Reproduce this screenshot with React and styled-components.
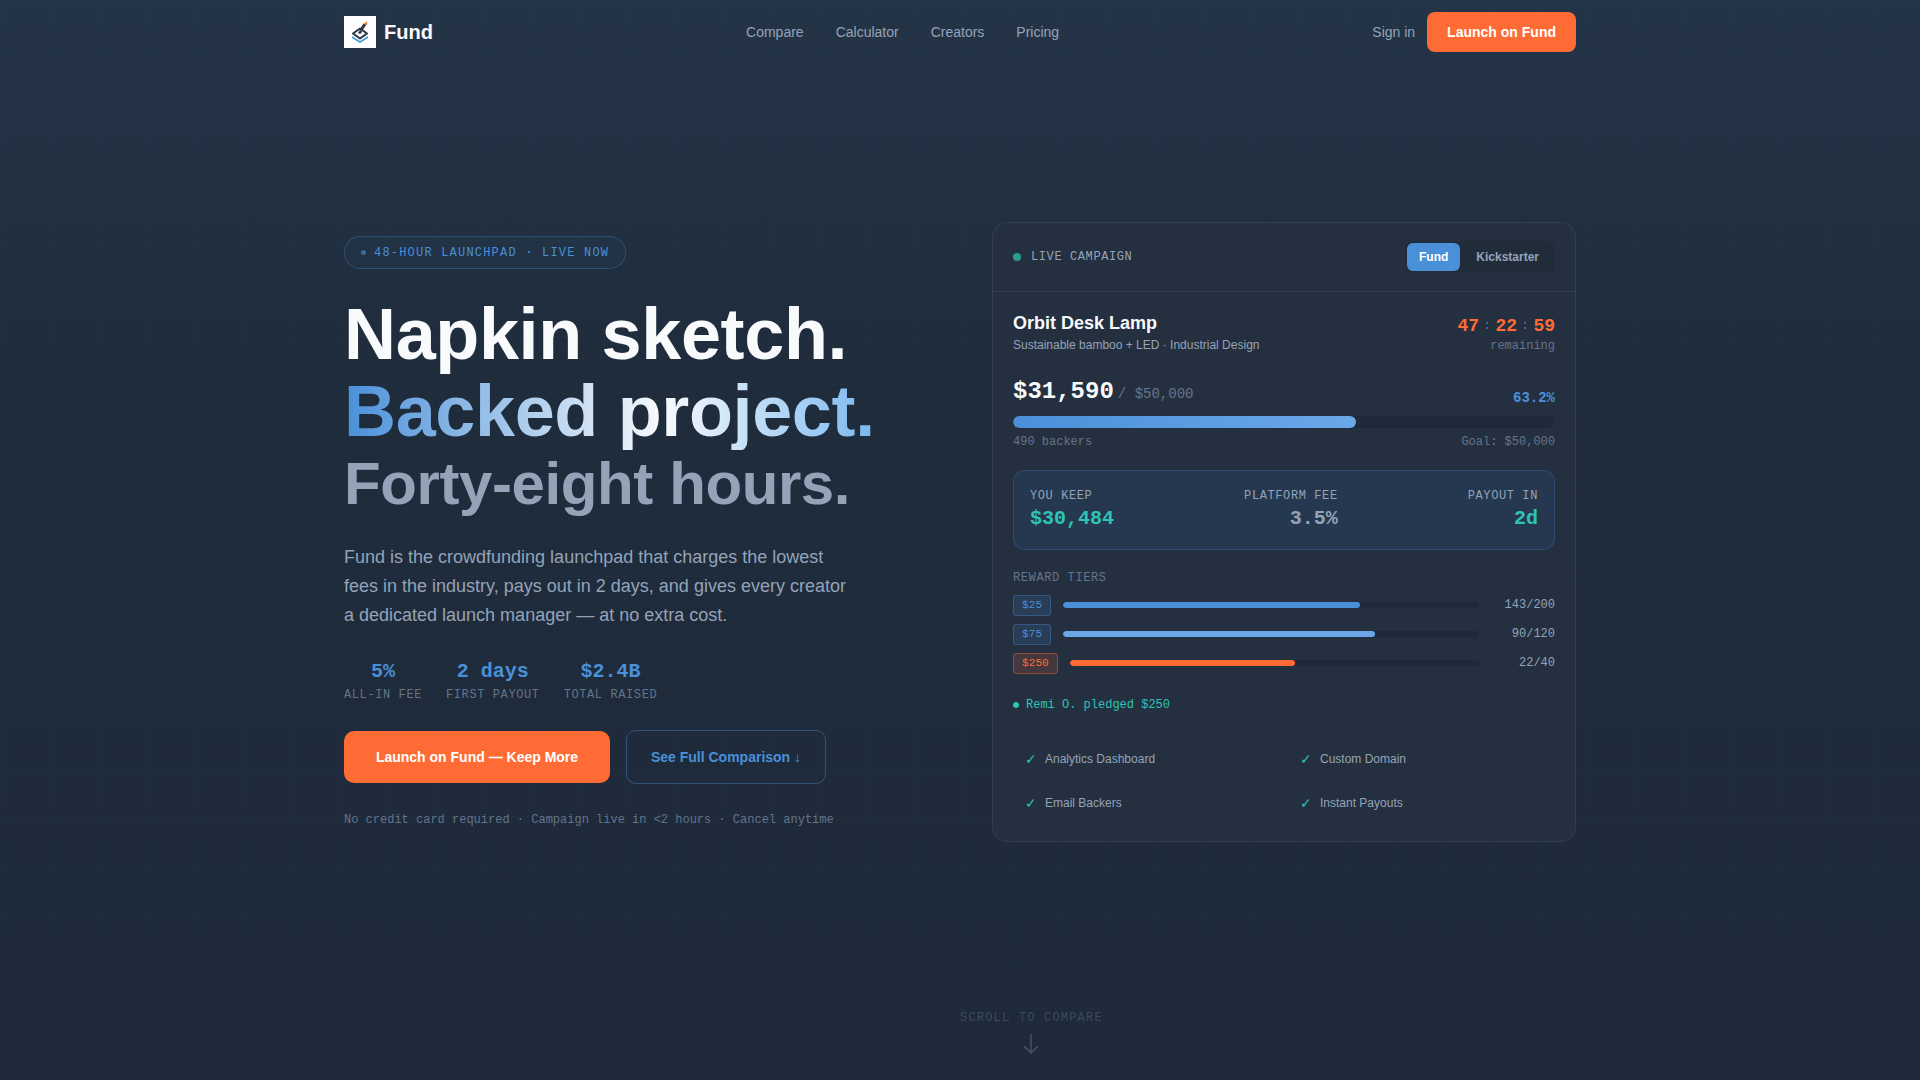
import React from "react";
import styled, { createGlobalStyle } from "styled-components";

const sans = `"Liberation Sans", Arial, sans-serif`;
const mono = `"Liberation Mono", "Courier New", monospace`;

const GlobalStyle = createGlobalStyle`
  * { box-sizing: border-box; }
  html, body { margin: 0; padding: 0; background: #1e2a3a; }
  body { font-family: ${sans}; color: #f8fafc; }
`;

const Page = styled.div`
  position: relative;
  height: 1080px;
  overflow: hidden;
  background-color: #1e2a3a;
  background-image:
    linear-gradient(rgba(74, 144, 217, 0.025) 1px, transparent 1px),
    linear-gradient(90deg, rgba(74, 144, 217, 0.025) 1px, transparent 1px),
    linear-gradient(180deg, #243447 0%, #1f2c3c 34%, #1e2a3a 100%);
  background-size: 48px 48px, 48px 48px, 100% 100%;
`;

const Nav = styled.nav`
  width: 1232px;
  height: 64px;
  margin: 0 auto;
  display: flex;
  align-items: center;
  justify-content: space-between;
`;

const Brand = styled.div`
  display: flex;
  align-items: center;
  gap: 8px;
  font-size: 20px;
  font-weight: 700;
`;

const LogoBox = styled.div`
  width: 32px;
  height: 32px;
  background: #ffffff;
  display: flex;
`;

const NavLinks = styled.div`
  display: flex;
  gap: 32px;
`;

const NavLink = styled.a`
  font-size: 14px;
  color: #94a3b8;
`;

const NavActions = styled.div`
  display: flex;
  align-items: center;
  gap: 12px;
`;

const NavCta = styled.button`
  height: 40px;
  padding: 0 20px;
  border: 0;
  border-radius: 8px;
  background: #ff6b35;
  color: #ffffff;
  font: 700 14px ${sans};
`;

const Hero = styled.main`
  width: 1232px;
  margin: 158px auto 0;
  display: grid;
  grid-template-columns: 584px 584px;
  gap: 64px;
  align-items: center;
`;

const Left = styled.section`
  padding-top: 1px;
  display: flex;
  flex-direction: column;
  align-items: flex-start;
`;

const Pill = styled.div`
  display: flex;
  align-items: center;
  gap: 8px;
  height: 33px;
  padding: 1px 16px 0;
  border: 1px solid rgba(74, 144, 217, 0.3);
  border-radius: 999px;
  background: rgba(74, 144, 217, 0.04);
  color: #4a90d9;
  font: 12px ${mono};
  letter-spacing: 1.2px;
`;

const PillDot = styled.span`
  width: 5px;
  height: 5px;
  border-radius: 50%;
  background: #4a90d9;
  opacity: 0.6;
`;

const Title = styled.h1`
  margin: 27px 0 0;
  font-size: 72px;
  line-height: 77px;
  font-weight: 700;
  letter-spacing: -0.36px;
  color: #f8fafc;
`;

const Line = styled.span`
  display: block;
`;

const Gradient = styled.span`
  display: inline-block;
  background: linear-gradient(90deg, #4a90d9 0%, #f8fafc 60%, #7ab8f0 100%);
  -webkit-background-clip: text;
  background-clip: text;
  color: transparent;
`;

const SubLine = styled.span`
  display: block;
  font-size: 60px;
  line-height: 68px;
  color: #94a3b8;
  letter-spacing: -0.4px;
`;

const Lead = styled.p`
  width: 510px;
  margin: 25px 0 0;
  font-size: 18px;
  line-height: 29.25px;
  color: #94a3b8;
`;

const Stats = styled.div`
  display: flex;
  gap: 24px;
  margin-top: 29px;
`;

const Stat = styled.div`
  display: flex;
  flex-direction: column;
  align-items: center;
`;

const StatValue = styled.div`
  font: 700 20px/26px ${mono};
  color: #4a90d9;
`;

const StatLabel = styled.div`
  margin-top: 2px;
  font: 12px/16px ${mono};
  letter-spacing: 0.6px;
  color: #64748b;
`;

const Actions = styled.div`
  display: flex;
  align-items: center;
  gap: 16px;
  margin-top: 27px;
`;

const Primary = styled.button`
  height: 52px;
  width: 266px;
  border: 0;
  border-radius: 10px;
  background: #ff6b35;
  color: #ffffff;
  font: 700 14px ${sans};
`;

const Secondary = styled.button`
  height: 54px;
  width: 200px;
  border: 1px solid rgba(74, 144, 217, 0.4);
  border-radius: 10px;
  background: transparent;
  color: #4a90d9;
  font: 700 14px ${sans};
`;

const Fine = styled.div`
  margin-top: 27px;
  font: 12px/18px ${mono};
  color: #64748b;
`;

const Card = styled.section`
  height: 620px;
  border: 1px solid rgba(148, 163, 184, 0.12);
  border-radius: 16px;
  background: #243040;
  display: flex;
  flex-direction: column;
`;

const CardHead = styled.header`
  height: 69px;
  padding: 0 20px;
  display: flex;
  align-items: center;
  justify-content: space-between;
  border-bottom: 1px solid rgba(148, 163, 184, 0.1);
`;

const Live = styled.div`
  display: flex;
  align-items: center;
  gap: 10px;
  font: 12px ${mono};
  letter-spacing: 0.6px;
  color: #94a3b8;
`;

const LiveDot = styled.span`
  width: 8px;
  height: 8px;
  border-radius: 50%;
  background: #2a9d8f;
`;

const Toggle = styled.div`
  display: flex;
  padding: 2px;
  border-radius: 8px;
  background: #212c3b;
`;

const ToggleButton = styled.button`
  height: 28px;
  padding: ${(p) => (p.$active ? "0 12px" : "0 14px 0 16px")};
  border: 0;
  border-radius: 6px;
  background: ${(p) => (p.$active ? "#4a90d9" : "transparent")};
  color: ${(p) => (p.$active ? "#ffffff" : "#94a3b8")};
  font: 700 12px ${sans};
`;

const CardBody = styled.div`
  padding: 20px 20px 0;
  display: flex;
  flex-direction: column;
`;

const SplitRow = styled.div`
  display: flex;
  justify-content: space-between;
  align-items: ${(p) => p.$align || "flex-start"};
`;

const Product = styled.div`
  font-size: 18px;
  line-height: 22px;
  font-weight: 700;
  color: #f8fafc;
`;

const ProductSub = styled.div`
  margin-top: 2px;
  font-size: 12px;
  line-height: 18px;
  color: #94a3b8;
`;

const Timer = styled.div`
  display: flex;
  justify-content: flex-end;
  gap: 4.6px;
  margin-top: 2px;
  font: 700 18px/24px ${mono};
  color: #ff6b35;
`;

const TimerSep = styled.span`
  font-size: 12px;
  font-weight: 400;
  color: #64748b;
`;

const Remaining = styled.div`
  text-align: right;
  font: 12px/16px ${mono};
  color: #64748b;
`;

const Amount = styled.div`
  margin-top: 22px;
  display: flex;
  align-items: baseline;
  gap: 4px;
  font: 700 24px/32px ${mono};
  color: #f8fafc;
`;

const AmountOf = styled.span`
  font: 14px ${mono};
  color: #64748b;
`;

const Percent = styled.span`
  padding-bottom: 2px;
  font: 700 14px ${mono};
  color: #4a90d9;
`;

const Track = styled.div`
  height: ${(p) => p.$h}px;
  flex: 1;
  border-radius: 999px;
  background: #1e2a3a;
  overflow: hidden;
`;

const Fill = styled.div`
  height: 100%;
  border-radius: 999px;
  background: ${(p) => p.$bg};
`;

const MainTrack = styled.div`
  margin-top: 8px;
  display: flex;
`;

const Tiny = styled.div`
  margin-top: 6px;
  font: 12px/16px ${mono};
  color: #64748b;
`;

const Keep = styled.div`
  height: 80px;
  margin-top: 20px;
  padding: 0 16px;
  display: flex;
  align-items: center;
  justify-content: space-between;
  border: 1px solid rgba(74, 144, 217, 0.25);
  border-radius: 12px;
  background: #25384f;
`;

const KeepCol = styled.div`
  text-align: ${(p) => p.$align || "left"};
`;

const KeepLabel = styled.div`
  font: 12px/16px ${mono};
  letter-spacing: 0.6px;
  color: #94a3b8;
`;

const KeepValue = styled.div`
  margin-top: 2px;
  font: 700 20px/26px ${mono};
  color: ${(p) => p.$color};
`;

const TierTitle = styled.div`
  margin-top: 20px;
  font: 12px/16px ${mono};
  letter-spacing: 0.6px;
  color: #64748b;
`;

const Tiers = styled.div`
  margin-top: 8px;
  display: flex;
  flex-direction: column;
  gap: 7px;
`;

const Tier = styled.div`
  display: flex;
  align-items: center;
  gap: 12px;
  height: 22px;
`;

const Chip = styled.span`
  height: 21px;
  padding: 0 8px;
  display: flex;
  align-items: center;
  border-radius: 4px;
  font: 11px ${mono};
  letter-spacing: 0.1px;
  border: 1px solid ${(p) => (p.$hot ? "rgba(255,107,53,0.4)" : "rgba(74,144,217,0.35)")};
  background: ${(p) => (p.$hot ? "rgba(255,107,53,0.15)" : "rgba(74,144,217,0.15)")};
  color: ${(p) => (p.$hot ? "#ff6b35" : "#4a90d9")};
`;

const TierCount = styled.span`
  width: 64px;
  text-align: right;
  font: 12px ${mono};
  color: #94a3b8;
`;

const Pledge = styled.div`
  margin-top: 23px;
  display: flex;
  align-items: center;
  gap: 7px;
  font: 12px/16px ${mono};
  color: #2ec4b6;
`;

const PledgeDot = styled.span`
  width: 6px;
  height: 6px;
  border-radius: 50%;
  background: #2ec4b6;
`;

const Features = styled.div`
  margin-top: 24px;
  display: grid;
  grid-template-columns: 1fr 1fr;
  column-gap: 8px;
`;

const Feature = styled.div`
  height: 44px;
  padding-left: 12px;
  display: flex;
  align-items: center;
  gap: 8px;
  font-size: 12px;
  color: #94a3b8;
`;

const Check = styled.span`
  color: #2ec4b6;
  font-size: 14px;
`;

const Scroll = styled.div`
  position: absolute;
  left: 50%;
  bottom: 25px;
  display: flex;
  flex-direction: column;
  align-items: center;
  gap: 7px;
  font: 12px/16px ${mono};
  letter-spacing: 1.2px;
  color: #3a4a5e;
`;

function Logo() {
  return (
    <svg width="32" height="32" viewBox="0 0 32 32" fill="none">
      <path d="M8 20l8 5 8-5v2l-8 5-8-5z" fill="#3d9bd6" />
      <path d="M9 17.5l7-5 7 5-7 5z" fill="#ffffff" stroke="#2b3340" strokeWidth="2" strokeLinejoin="round" />
      <path d="M14 17l2-3 2 1-.5 2-1.5 1z" fill="#2b3340" />
      <path d="M17 14l4-6" stroke="#2b3340" strokeWidth="3" />
      <path d="M20 8l3-3 .5 4z" fill="#e8862e" />
    </svg>
  );
}

function DownArrow() {
  return (
    <svg width="16" height="22" viewBox="0 0 16 22" fill="none" stroke="#475569" strokeWidth="1.5">
      <path d="M8 1v19" />
      <path d="M1 13l7 7 7-7" />
    </svg>
  );
}

const tiers = [
  { price: "$25", pct: 71.5, count: "143/200", color: "#4a90d9" },
  { price: "$75", pct: 75, count: "90/120", color: "#6aa8e8" },
  { price: "$250", pct: 55, count: "22/40", color: "#ff6b35", hot: true },
];

const stats = [
  ["5%", "ALL-IN FEE"],
  ["2 days", "FIRST PAYOUT"],
  ["$2.4B", "TOTAL RAISED"],
];

const features = ["Analytics Dashboard", "Custom Domain", "Email Backers", "Instant Payouts"];

export default function App() {
  return (
    <Page>
      <GlobalStyle />
      <Nav>
        <Brand>
          <LogoBox><Logo /></LogoBox>
          Fund
        </Brand>
        <NavLinks>
          <NavLink>Compare</NavLink>
          <NavLink>Calculator</NavLink>
          <NavLink>Creators</NavLink>
          <NavLink>Pricing</NavLink>
        </NavLinks>
        <NavActions>
          <NavLink>Sign in</NavLink>
          <NavCta>Launch on Fund</NavCta>
        </NavActions>
      </Nav>
      <Hero>
        <Left>
          <Pill><PillDot />48-HOUR LAUNCHPAD · LIVE NOW</Pill>
          <Title>
            <Line>Napkin sketch.</Line>
            <Line><Gradient>Backed project.</Gradient></Line>
            <SubLine>Forty-eight hours.</SubLine>
          </Title>
          <Lead>
            Fund is the crowdfunding launchpad that charges the lowest fees in the industry, pays out
            in 2 days, and gives every creator a dedicated launch manager — at no extra cost.
          </Lead>
          <Stats>
            {stats.map(([value, label]) => (
              <Stat key={label}>
                <StatValue>{value}</StatValue>
                <StatLabel>{label}</StatLabel>
              </Stat>
            ))}
          </Stats>
          <Actions>
            <Primary>Launch on Fund — Keep More</Primary>
            <Secondary>See Full Comparison ↓</Secondary>
          </Actions>
          <Fine>No credit card required · Campaign live in &lt;2 hours · Cancel anytime</Fine>
        </Left>
        <Card>
          <CardHead>
            <Live><LiveDot />LIVE CAMPAIGN</Live>
            <Toggle>
              <ToggleButton $active>Fund</ToggleButton>
              <ToggleButton>Kickstarter</ToggleButton>
            </Toggle>
          </CardHead>
          <CardBody>
            <SplitRow>
              <div>
                <Product>Orbit Desk Lamp</Product>
                <ProductSub>Sustainable bamboo + LED · Industrial Design</ProductSub>
              </div>
              <div>
                <Timer>47<TimerSep>:</TimerSep>22<TimerSep>:</TimerSep>59</Timer>
                <Remaining>remaining</Remaining>
              </div>
            </SplitRow>
            <SplitRow $align="flex-end">
              <Amount>$31,590<AmountOf>/ $50,000</AmountOf></Amount>
              <Percent>63.2%</Percent>
            </SplitRow>
            <MainTrack>
              <Track $h={12}>
                <Fill $bg="linear-gradient(90deg, #4a90d9, #6aa8e8)" style={{ width: "63.2%" }} />
              </Track>
            </MainTrack>
            <SplitRow>
              <Tiny>490 backers</Tiny>
              <Tiny>Goal: $50,000</Tiny>
            </SplitRow>
            <Keep>
              <KeepCol>
                <KeepLabel>YOU KEEP</KeepLabel>
                <KeepValue $color="#2ec4b6">$30,484</KeepValue>
              </KeepCol>
              <KeepCol $align="right">
                <KeepLabel>PLATFORM FEE</KeepLabel>
                <KeepValue $color="#94a3b8">3.5%</KeepValue>
              </KeepCol>
              <KeepCol $align="right">
                <KeepLabel>PAYOUT IN</KeepLabel>
                <KeepValue $color="#2ec4b6">2d</KeepValue>
              </KeepCol>
            </Keep>
            <TierTitle>REWARD TIERS</TierTitle>
            <Tiers>
              {tiers.map((t) => (
                <Tier key={t.price}>
                  <Chip $hot={t.hot}>{t.price}</Chip>
                  <Track $h={6}>
                    <Fill $bg={t.color} style={{ width: `${t.pct}%` }} />
                  </Track>
                  <TierCount>{t.count}</TierCount>
                </Tier>
              ))}
            </Tiers>
            <Pledge><PledgeDot />Remi O. pledged $250</Pledge>
            <Features>
              {features.map((f) => (
                <Feature key={f}><Check>✓</Check>{f}</Feature>
              ))}
            </Features>
          </CardBody>
        </Card>
      </Hero>
      <Scroll>
        SCROLL TO COMPARE
        <DownArrow />
      </Scroll>
    </Page>
  );
}
